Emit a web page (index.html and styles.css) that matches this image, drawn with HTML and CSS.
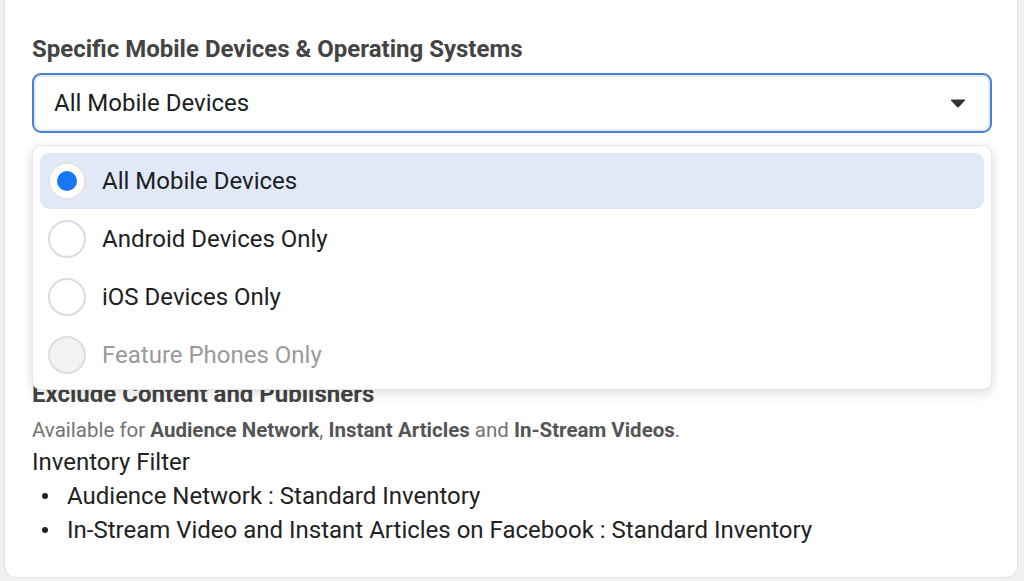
FILE: index.html
```html
<!DOCTYPE html>
<html lang="en">
<head>
<meta charset="utf-8">
<title>Mobile Devices</title>
<link rel="stylesheet" href="styles.css">
</head>
<body>
<div class="card">
  <h2 class="field-label">Specific Mobile Devices &amp; Operating Systems</h2>
  <div class="select-wrap">
    <div class="select">
      <span class="select-value">All Mobile Devices</span>
      <svg class="caret" width="16" height="9" viewBox="0 0 16 9"><path d="M1 1.5 Q0.6 0.5 1.8 0.5 H14.2 Q15.4 0.5 15 1.5 L8.9 8 Q8 8.8 7.1 8 Z" fill="#333"/></svg>
    </div>
    <div class="menu">
      <div class="option selected"><span class="radio"><span class="dot"></span></span><span>All Mobile Devices</span></div>
      <div class="option"><span class="radio"></span><span>Android Devices Only</span></div>
      <div class="option"><span class="radio"></span><span>iOS Devices Only</span></div>
      <div class="option disabled"><span class="radio"></span><span>Feature Phones Only</span></div>
    </div>
  </div>
  <div class="hidden-area"></div>
  <h3 class="section-title">Exclude Content and Publishers</h3>
  <p class="note">Available for <b>Audience Network</b>, <b>Instant Articles</b> and <b>In-Stream Videos</b>.</p>
  <p class="filter-title">Inventory Filter</p>
  <ul class="filter-list">
    <li>Audience Network : Standard Inventory</li>
    <li>In-Stream Video and Instant Articles on Facebook : Standard Inventory</li>
  </ul>
</div>
</body>
</html>
```

FILE: styles.css
```css
html, body {
  margin: 0;
  padding: 0;
}
body {
  background: #f1f1f1;
  font-family: Roboto, "Liberation Sans", Arial, sans-serif;
  width: 1024px;
  height: 581px;
  overflow: hidden;
}
.card {
  box-sizing: border-box;
  margin: 0 6px 0 4px;
  height: 578px;
  background: #fff;
  border: 1px solid #e2e2e2;
  border-top: none;
  border-radius: 0 0 12px 12px;
  padding: 35px 0 0 27px;
  position: relative;
}
.field-label {
  margin: 0;
  font-size: 24px;
  line-height: 28px;
  font-weight: 700;
  color: #444;
}
.select-wrap {
  position: relative;
  margin-top: 10px;
  width: 960px;
}
.select {
  box-sizing: border-box;
  height: 60px;
  border: 2px solid #4a7fd6;
  border-radius: 9px;
  box-shadow: inset 0 0 0 2px #e5edfb;
  display: flex;
  align-items: center;
  justify-content: space-between;
  padding: 0 24px 0 20px;
}
.select-value {
  font-size: 24px;
  color: #1c1e21;
}
.caret {
  display: block;
}
.menu {
  position: absolute;
  top: 72px;
  left: 0;
  width: 960px;
  box-sizing: border-box;
  background: #fff;
  border: 1px solid #e6e6e6;
  border-radius: 9px;
  box-shadow: 0 3px 12px rgba(0,0,0,0.14);
  padding: 7px 7px 6px 7px;
  display: flex;
  flex-direction: column;
  gap: 2px;
  z-index: 2;
}
.option {
  height: 56px;
  display: flex;
  align-items: center;
  gap: 16px;
  padding-left: 8px;
  border-radius: 9px;
  font-size: 24px;
  color: #1c1e21;
}
.option.selected {
  background: #e1e9f9;
}
.radio {
  box-sizing: border-box;
  width: 38px;
  height: 38px;
  border-radius: 50%;
  border: 2px solid #dcdcdc;
  background: #fff;
  display: flex;
  align-items: center;
  justify-content: center;
  flex: none;
}
.selected .radio {
  border-color: #e4e4e4;
}
.dot {
  width: 20px;
  height: 20px;
  border-radius: 50%;
  background: #1877f2;
}
.disabled {
  color: #9a9a9a;
}
.disabled .radio {
  background: #f2f2f2;
  border-color: #dedede;
}
.hidden-area {
  height: 247px;
}
.section-title {
  margin: 0;
  font-size: 24px;
  line-height: 28px;
  font-weight: 700;
  color: #444;
}
.note {
  margin: 10px 0 0;
  font-size: 20.5px;
  line-height: 24px;
  color: #737373;
}
.note b {
  color: #555;
}
.filter-title {
  margin: 5px 0 0;
  font-size: 24px;
  line-height: 30px;
  color: #222;
}
.filter-list {
  margin: 2px 0 0;
  padding: 0;
  list-style: none;
  font-size: 24px;
  line-height: 34px;
  color: #222;
}
.filter-list li {
  display: flex;
  align-items: center;
  gap: 19px;
}
.filter-list li::before {
  content: "";
  width: 6px;
  height: 6px;
  border-radius: 50%;
  background: #222;
  margin-left: 10px;
  flex: none;
}
```
